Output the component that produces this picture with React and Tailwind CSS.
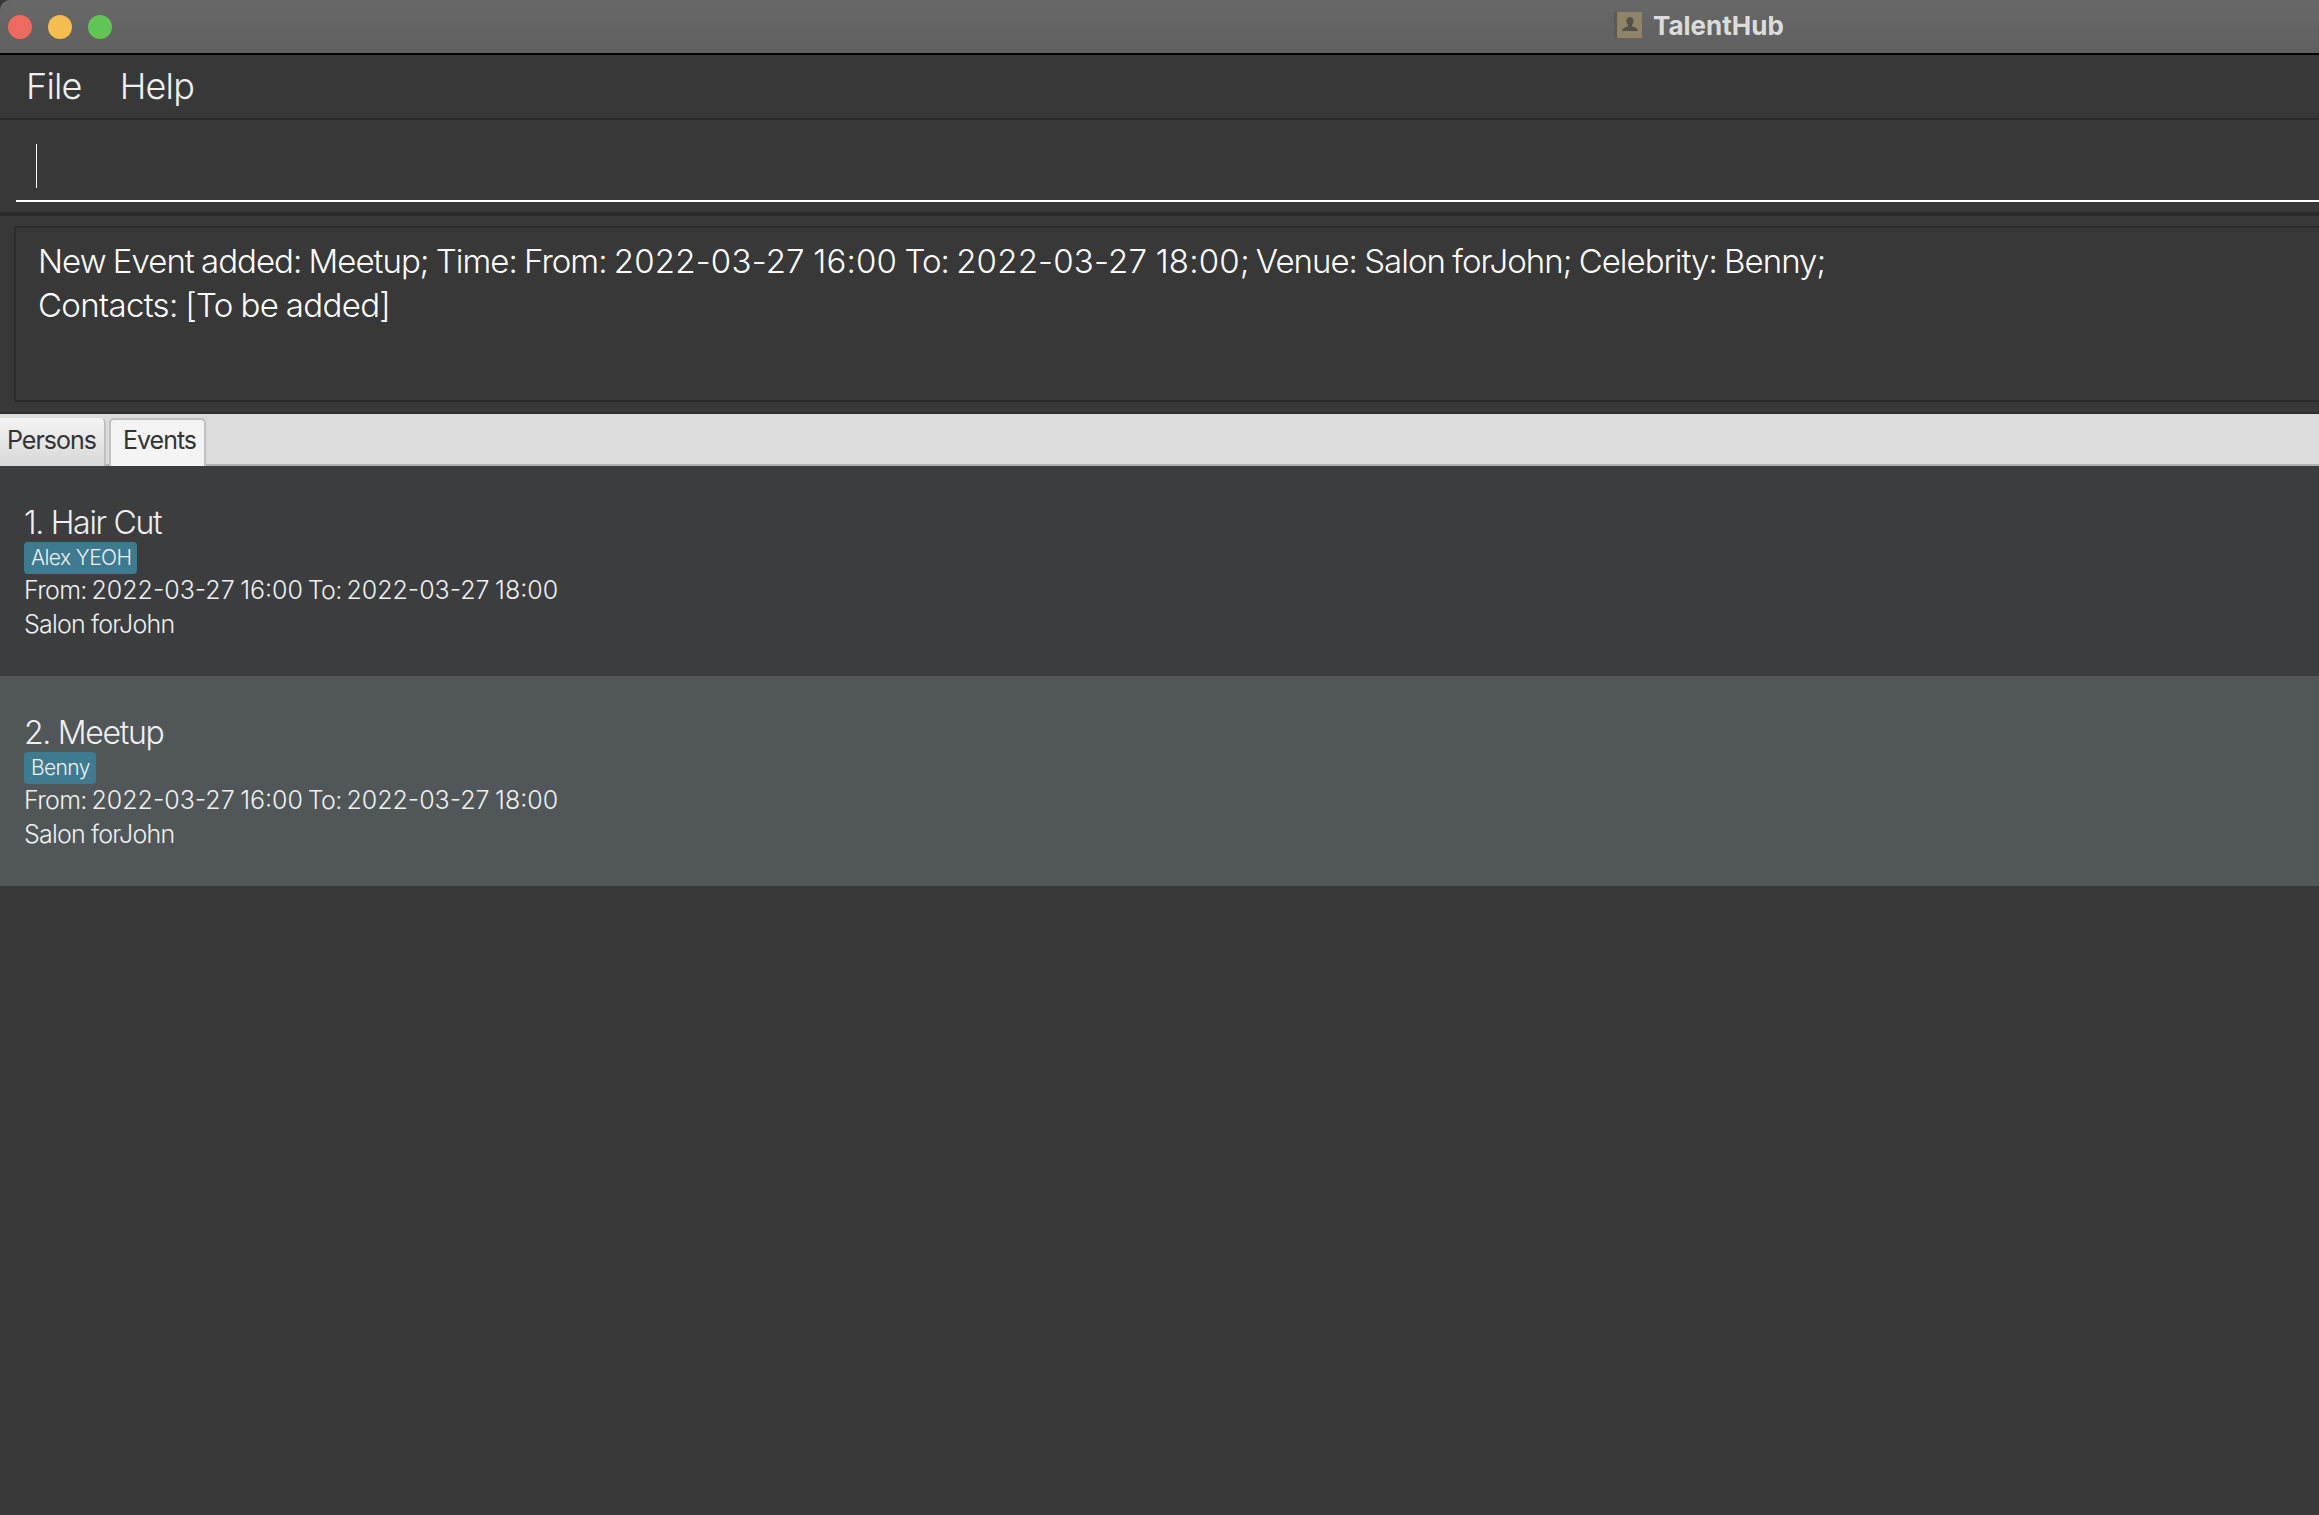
const EVENTS = [
  { title: "1. Hair Cut", person: "Alex YEOH", bg: "bg-[#3c3d3f]" },
  { title: "2. Meetup", person: "Benny", bg: "bg-[#515658]" },
];

const AppIcon = () => (
  <svg width="28" height="26" viewBox="0 0 28 26" className="shrink-0">
    <rect x="0" y="0" width="28" height="26" rx="1" fill="#5f5a50" />
    <rect x="3" y="0" width="25" height="26" rx="1" fill="#8f8468" />
    <path d="M16 5c-2.4 0-3.6 1.9-3.6 4 0 1.6.7 3 1.6 3.8v1.4c-2.4.9-5 1.7-5.6 3.3-.2.6-.2 1.2-.2 1.5h15.6c0-.3 0-.9-.2-1.5-.6-1.6-3.2-2.4-5.6-3.3v-1.4c.9-.8 1.6-2.2 1.6-3.8 0-2.1-1.2-4-3.6-4z" fill="#55514a" />
  </svg>
);

const TitleBar = () => (
  <div className="h-[55px] shrink-0 flex items-center border-b-2 border-black bg-gradient-to-b from-[#686868] to-[#606060] rounded-tl-[10px] pl-[8px]">
    <div className="flex gap-4">
      <span className="w-6 h-6 rounded-full bg-[#ee6a5f]" />
      <span className="w-6 h-6 rounded-full bg-[#f5bd4f]" />
      <span className="w-6 h-6 rounded-full bg-[#61c454]" />
    </div>
    <div className="flex items-center gap-[11px] ml-[1502px] -mt-[3px]">
      <AppIcon />
      <span className="text-[26px] font-bold text-[#dcdcdc]">TalentHub</span>
    </div>
  </div>
);

const MenuBar = () => (
  <div className="h-[65px] shrink-0 flex items-center gap-[38px] pl-[26px] pb-[1px] border-b-2 border-[#2c2c2c] text-[36px] tracking-[-0.8px] font-[350] text-[#f0f0f0]">
    <span>File</span>
    <span>Help</span>
  </div>
);

const CommandBox = () => (
  <div className="h-[96px] shrink-0 border-b-4 border-[#2c2c2c] pl-4 pt-[24px]">
    <div className="h-[58px] border-b-2 border-white pl-[20px]">
      <div className="w-px h-[44px] bg-white" />
    </div>
  </div>
);

const ResultBox = () => (
  <div className="h-[198px] shrink-0 border-b-2 border-[#2c2c2c] pl-[14px] pt-[10px] pb-[10px]">
    <div className="h-full border-2 border-r-0 border-[#2c2c2c] pl-[22px] pt-[11px] text-[33px] leading-[44px] tracking-[-0.98px] [word-spacing:-1px] font-[350] text-white">
      <div>
        New Event added: Meetup; Time: From: <span className="tracking-[0.2px]">2022-03-27 16:00</span> To:{" "}
        <span className="tracking-[0.2px]">2022-03-27 18:00</span>; Venue: Salon forJohn; Celebrity: Benny;
      </div>
      <div className="tracking-[-0.65px]">Contacts: [To be added]</div>
    </div>
  </div>
);

const Tabs = () => (
  <div className="h-[52px] shrink-0 flex items-end gap-[3px] border-b-2 border-[#b0b0b0] bg-[#dcdcdc] text-[25px] tracking-[-1px] text-[#333333]">
    <div className="w-[106px] h-[48px] -mb-[2px] flex items-center pl-[7px] pb-[3px] border-r-2 border-[#c0c0c0] rounded-tr-[5px] bg-gradient-to-b from-[#f4f4f4] to-[#d8d8d8]">
      Persons
    </div>
    <div className="w-[97px] h-[48px] -mb-[2px] flex items-center pl-[12px] pb-[5px] border-x-2 border-t-2 border-[#c0c0c0] rounded-t-[5px] bg-[#f4f4f4]">
      Events
    </div>
  </div>
);

const EventRow = ({ event }) => (
  <div className={`h-[210px] pl-6 pt-[37px] font-[350] text-[#f0f0f0] ${event.bg}`}>
    <div className="text-[32px] leading-[40px] tracking-[-1.3px]">{event.title}</div>
    <div className="flex -mt-[1px]">
      <span className="h-8 flex items-center pl-[7px] pr-[6px] rounded-[4px] bg-[#3e7b91] text-[21px] tracking-[-0.6px] text-[#f0f0f0]">
        {event.person}
      </span>
    </div>
    <div className="text-[25px] leading-[34px] tracking-[-0.7px] [word-spacing:-1.5px] -mt-[1px]">
      From: <span className="tracking-[0px]">2022-03-27 16:00</span> To:{" "}
      <span className="tracking-[0px]">2022-03-27 18:00</span>
    </div>
    <div className="text-[25px] leading-[34px] tracking-[-0.8px]">Salon forJohn</div>
  </div>
);

export default function App() {
  return (
    <div className="w-[2319px] h-[1515px] flex flex-col overflow-hidden bg-[#383838] font-['Inter',sans-serif]">
      <TitleBar />
      <MenuBar />
      <CommandBox />
      <ResultBox />
      <Tabs />
      <div className="flex flex-col">
        {EVENTS.map((event) => (
          <EventRow key={event.title} event={event} />
        ))}
      </div>
    </div>
  );
}
